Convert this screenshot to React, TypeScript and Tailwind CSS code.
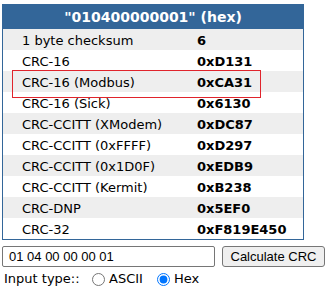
import React from "react";

const rows: [string, string][] = [
  ["1 byte checksum", "6"],
  ["CRC-16", "0xD131"],
  ["CRC-16 (Modbus)", "0xCA31"],
  ["CRC-16 (Sick)", "0x6130"],
  ["CRC-CCITT (XModem)", "0xDC87"],
  ["CRC-CCITT (0xFFFF)", "0xD297"],
  ["CRC-CCITT (0x1D0F)", "0xEDB9"],
  ["CRC-CCITT (Kermit)", "0xB238"],
  ["CRC-DNP", "0x5EF0"],
  ["CRC-32", "0xF819E450"],
];

export default function App() {
  return (
    <div
      className="w-[331px] h-[290px] bg-white pt-[4px] pl-[2px] text-black overflow-hidden"
      style={{ fontFamily: '"DejaVu Sans", Verdana, sans-serif' }}
    >
      <div className="relative w-[302px] border border-[#336699]">
        <div className="h-[24px] bg-[#336699] text-white font-bold text-[14px] flex items-center justify-center leading-none">
          "010400000001" (hex)
        </div>
        {rows.map(([name, val], i) => (
          <div
            key={name}
            className={`flex h-[21px] pt-[2px] items-center text-[13px] leading-none ${i % 2 === 0 ? "bg-[#eeeeee]" : "bg-white"}`}
          >
            <div className="w-[194px] pl-[19px] whitespace-nowrap">{name}</div>
            <div className="font-bold whitespace-nowrap">{val}</div>
          </div>
        ))}
        <div className="absolute left-[9px] top-[65px] w-[249px] h-[28px] border border-[#e0242c]" />
      </div>
      <div className="flex items-center mt-[6px] h-[21px]">
        <div
          className="w-[213px] h-[21px] border border-[#767676] rounded-[2px] flex items-center pl-[6px] text-[13px]"
          style={{ fontFamily: '"Liberation Sans", Arial, sans-serif' }}
        >
          01 04 00 00 00 01
        </div>
        <button
          className="ml-[7px] w-[103px] h-[21px] bg-[#efefef] border border-[#767676] rounded-[3px] text-[13px] flex items-center justify-center leading-none"
          style={{ fontFamily: '"Liberation Sans", Arial, sans-serif' }}
        >
          Calculate CRC
        </button>
      </div>
      <div className="flex items-center h-[22px] mt-[1px] text-[13px] pl-[2px]">
        <span className="w-[88px]">Input type::</span>
        <input type="radio" name="t" className="w-[13px] h-[13px] m-0 accent-[#0075ff]" readOnly />
        <span className="ml-[4px]">ASCII</span>
        <input type="radio" name="t" defaultChecked className="ml-[14px] w-[13px] h-[13px] m-0 accent-[#0075ff]" />
        <span className="ml-[4px]">Hex</span>
      </div>
    </div>
  );
}
